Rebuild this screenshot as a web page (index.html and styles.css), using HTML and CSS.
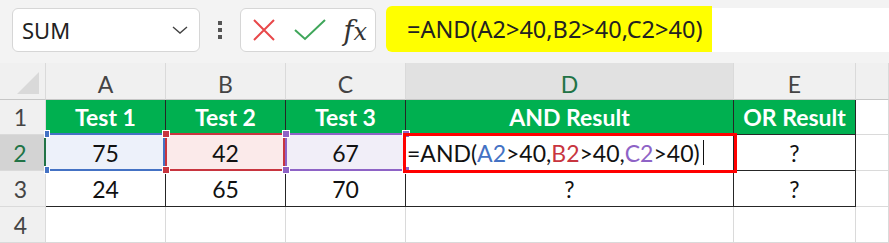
FILE: index.html
```html
<!DOCTYPE html>
<html lang="en">
<head>
    <meta charset="UTF-8">
    <title>AND Function</title>
    <link rel="stylesheet" href="styles.css">
</head>
<body>
    <div class="toolbar">
        <div class="name-box">
            <span>SUM</span>
            <svg class="chevron" width="18" height="10" viewBox="0 0 18 10"><path d="M2 2 L9 8 L16 2" fill="none" stroke="#444" stroke-width="1.4"/></svg>
        </div>
        <div class="dots"><i></i><i></i><i></i></div>
        <div class="fx-box">
            <svg width="26" height="26" viewBox="0 0 26 26"><path d="M3 3 L23 23 M23 3 L3 23" stroke="#e8484a" stroke-width="2"/></svg>
            <svg width="34" height="26" viewBox="0 0 34 26"><path d="M2 13 L12 22 L32 3" fill="none" stroke="#3fa65a" stroke-width="2"/></svg>
            <span class="fx"><em>f</em><em>x</em></span>
        </div>
        <div class="formula-bar">
            <span class="formula-hl">=AND(A2&gt;40,B2&gt;40,C2&gt;40)</span>
        </div>
    </div>

    <div class="sheet">
        <div class="corner"><span class="tri"></span></div>
        <div class="col-head">A</div>
        <div class="col-head">B</div>
        <div class="col-head">C</div>
        <div class="col-head active">D</div>
        <div class="col-head">E</div>
        <div class="col-head"></div>

        <div class="row-head">1</div>
        <div class="cell head">Test 1</div>
        <div class="cell head">Test 2</div>
        <div class="cell head">Test 3</div>
        <div class="cell head">AND Result</div>
        <div class="cell head">OR Result</div>
        <div class="cell blank"></div>

        <div class="row-head active">2</div>
        <div class="cell ref ref-a">75<b class="h tl"></b><b class="h bl"></b></div>
        <div class="cell ref ref-b">42<b class="h tl"></b><b class="h bl"></b><b class="h tr"></b><b class="h br"></b></div>
        <div class="cell ref ref-c">67<b class="h tl"></b><b class="h bl"></b><b class="h tr"></b><b class="h br"></b></div>
        <div class="cell edit">=AND(<span class="c-a">A2</span>&gt;40,<span class="c-b">B2</span>&gt;40,<span class="c-c">C2</span>&gt;40)<span class="caret"></span></div>
        <div class="cell">?</div>
        <div class="cell blank"></div>

        <div class="row-head">3</div>
        <div class="cell">24</div>
        <div class="cell">65</div>
        <div class="cell">70</div>
        <div class="cell">?</div>
        <div class="cell">?</div>
        <div class="cell blank"></div>

        <div class="row-head">4</div>
        <div class="cell blank"></div>
        <div class="cell blank"></div>
        <div class="cell blank"></div>
        <div class="cell blank"></div>
        <div class="cell blank"></div>
        <div class="cell blank"></div>
    </div>
</body>
</html>
```

FILE: styles.css
```css
:root {
    --green: #00b050;
    --xl-green: #217346;
    --line: #262626;
    --grid: #dadada;
    --head-bg: #f0f0f0;
}

body {
    margin: 0;
    width: 889px;
    height: 243px;
    overflow: hidden;
    background: #f3f3f3;
    font-family: Lato, 'Liberation Sans', sans-serif;
}

/* formula toolbar */
.toolbar {
    height: 63px;
    display: flex;
    align-items: flex-start;
    padding-top: 8px;
    box-sizing: border-box;
}

.name-box {
    margin-left: 12px;
    width: 188px;
    height: 44px;
    box-sizing: border-box;
    background: #fff;
    border: 1px solid #d6d6d6;
    border-radius: 6px;
    display: flex;
    align-items: center;
    justify-content: space-between;
    padding: 0 10px 0 9px;
    font-family: 'Noto Sans', 'Open Sans', sans-serif;
    font-size: 22px;
    color: #222;
}

.dots {
    width: 40px;
    height: 44px;
    display: flex;
    flex-direction: column;
    align-items: center;
    justify-content: center;
    gap: 3px;
}

.dots i {
    width: 4px;
    height: 4px;
    background: #555;
}

.fx-box {
    width: 136px;
    height: 44px;
    box-sizing: border-box;
    background: #fff;
    border: 1px solid #d6d6d6;
    border-radius: 6px;
    display: flex;
    align-items: center;
    justify-content: space-between;
    padding: 0 8px 0 10px;
}

.fx {
    font-family: 'DejaVu Serif', 'Liberation Serif', serif;
    font-size: 24px;
    color: #333;
}

.fx em:first-child {
    font-size: 27px;
}

.formula-bar {
    margin-left: 10px;
    flex: 1;
    height: 44px;
    background: #fff;
    border-radius: 6px 0 0 6px;
    display: flex;
    align-items: stretch;
}

.formula-hl {
    background: #ffff00;
    margin-top: -2px;
    width: 326px;
    box-sizing: border-box;
    padding-left: 21px;
    border-radius: 6px 0 0 6px;
    display: flex;
    align-items: center;
    font-family: 'Noto Sans', 'Open Sans', sans-serif;
    font-size: 23.5px;
    color: #222;
}

/* spreadsheet grid */
.sheet {
    display: grid;
    grid-template-columns: 46px 120px 120px 120px 328px 122px 33px;
    grid-template-rows: 37px 35px 36px 36px 36px;
    background: #fff;
}

.corner,
.col-head,
.row-head {
    background: var(--head-bg);
    box-sizing: border-box;
    border-right: 1px solid var(--grid);
    border-bottom: 1px solid #c6c6c6;
    color: #444;
    font-size: 23px;
    display: flex;
    align-items: center;
    justify-content: center;
}

.corner {
    position: relative;
}

.tri {
    position: absolute;
    right: 6px;
    bottom: 5px;
    width: 0;
    height: 0;
    border-left: 22px solid transparent;
    border-bottom: 22px solid #d9d9d9;
}

.col-head {
    padding-top: 5px;
}

.col-head.active {
    background: #e1e1e1;
    color: var(--xl-green);
}

.row-head {
    border-bottom-color: var(--grid);
    padding-right: 4px;
}

.row-head.active {
    background: #d3d3d3;
    color: var(--xl-green);
    border-right: 2px solid var(--xl-green);
}

.cell {
    position: relative;
    box-sizing: border-box;
    border-right: 1px solid var(--line);
    border-bottom: 1px solid var(--line);
    display: flex;
    align-items: center;
    justify-content: center;
    font-size: 23px;
    color: #111;
}

.cell.blank {
    border-right: 1px solid var(--grid);
    border-bottom: 1px solid var(--grid);
}

.cell.head {
    background: var(--green);
    color: #fff;
    font-weight: bold;
    font-size: 23px;
}

/* highlighted references */
.ref::after {
    content: '';
    position: absolute;
    inset: -2px 0 -1px -1px;
    border: 2px solid var(--c);
    pointer-events: none;
}

.ref-a { --c: #4472c4; background: #edf1fa; }
.ref-b { --c: #c8353f; background: #fbeaea; }
.ref-c { --c: #8e63c6; background: #f1eef8; }

.ref-a::after {
    border-left: none;
}

.h {
    position: absolute;
    width: 6px;
    height: 6px;
    background: var(--c);
    border: 1px solid #fff;
    z-index: 2;
}

.h.tl { left: -4px; top: -5px; }
.h.bl { left: -4px; bottom: -4px; }
.h.tr { right: -5px; top: -5px; }
.h.br { right: -5px; bottom: -4px; }

.ref-a .h.tl,
.ref-a .h.bl { left: -2px; width: 4px; }

/* cell in edit mode */
.edit {
    justify-content: flex-start;
    padding-left: 1px;
    z-index: 3;
}

.edit::after {
    content: '';
    position: absolute;
    inset: -2px -4px -3px -3px;
    border: 3px solid #ff0000;
}

.c-a { color: #4472c4; }
.c-b { color: #c8353f; }
.c-c { color: #8e63c6; }

.caret {
    width: 1px;
    height: 25px;
    background: #111;
    margin-left: 3px;
}
```
